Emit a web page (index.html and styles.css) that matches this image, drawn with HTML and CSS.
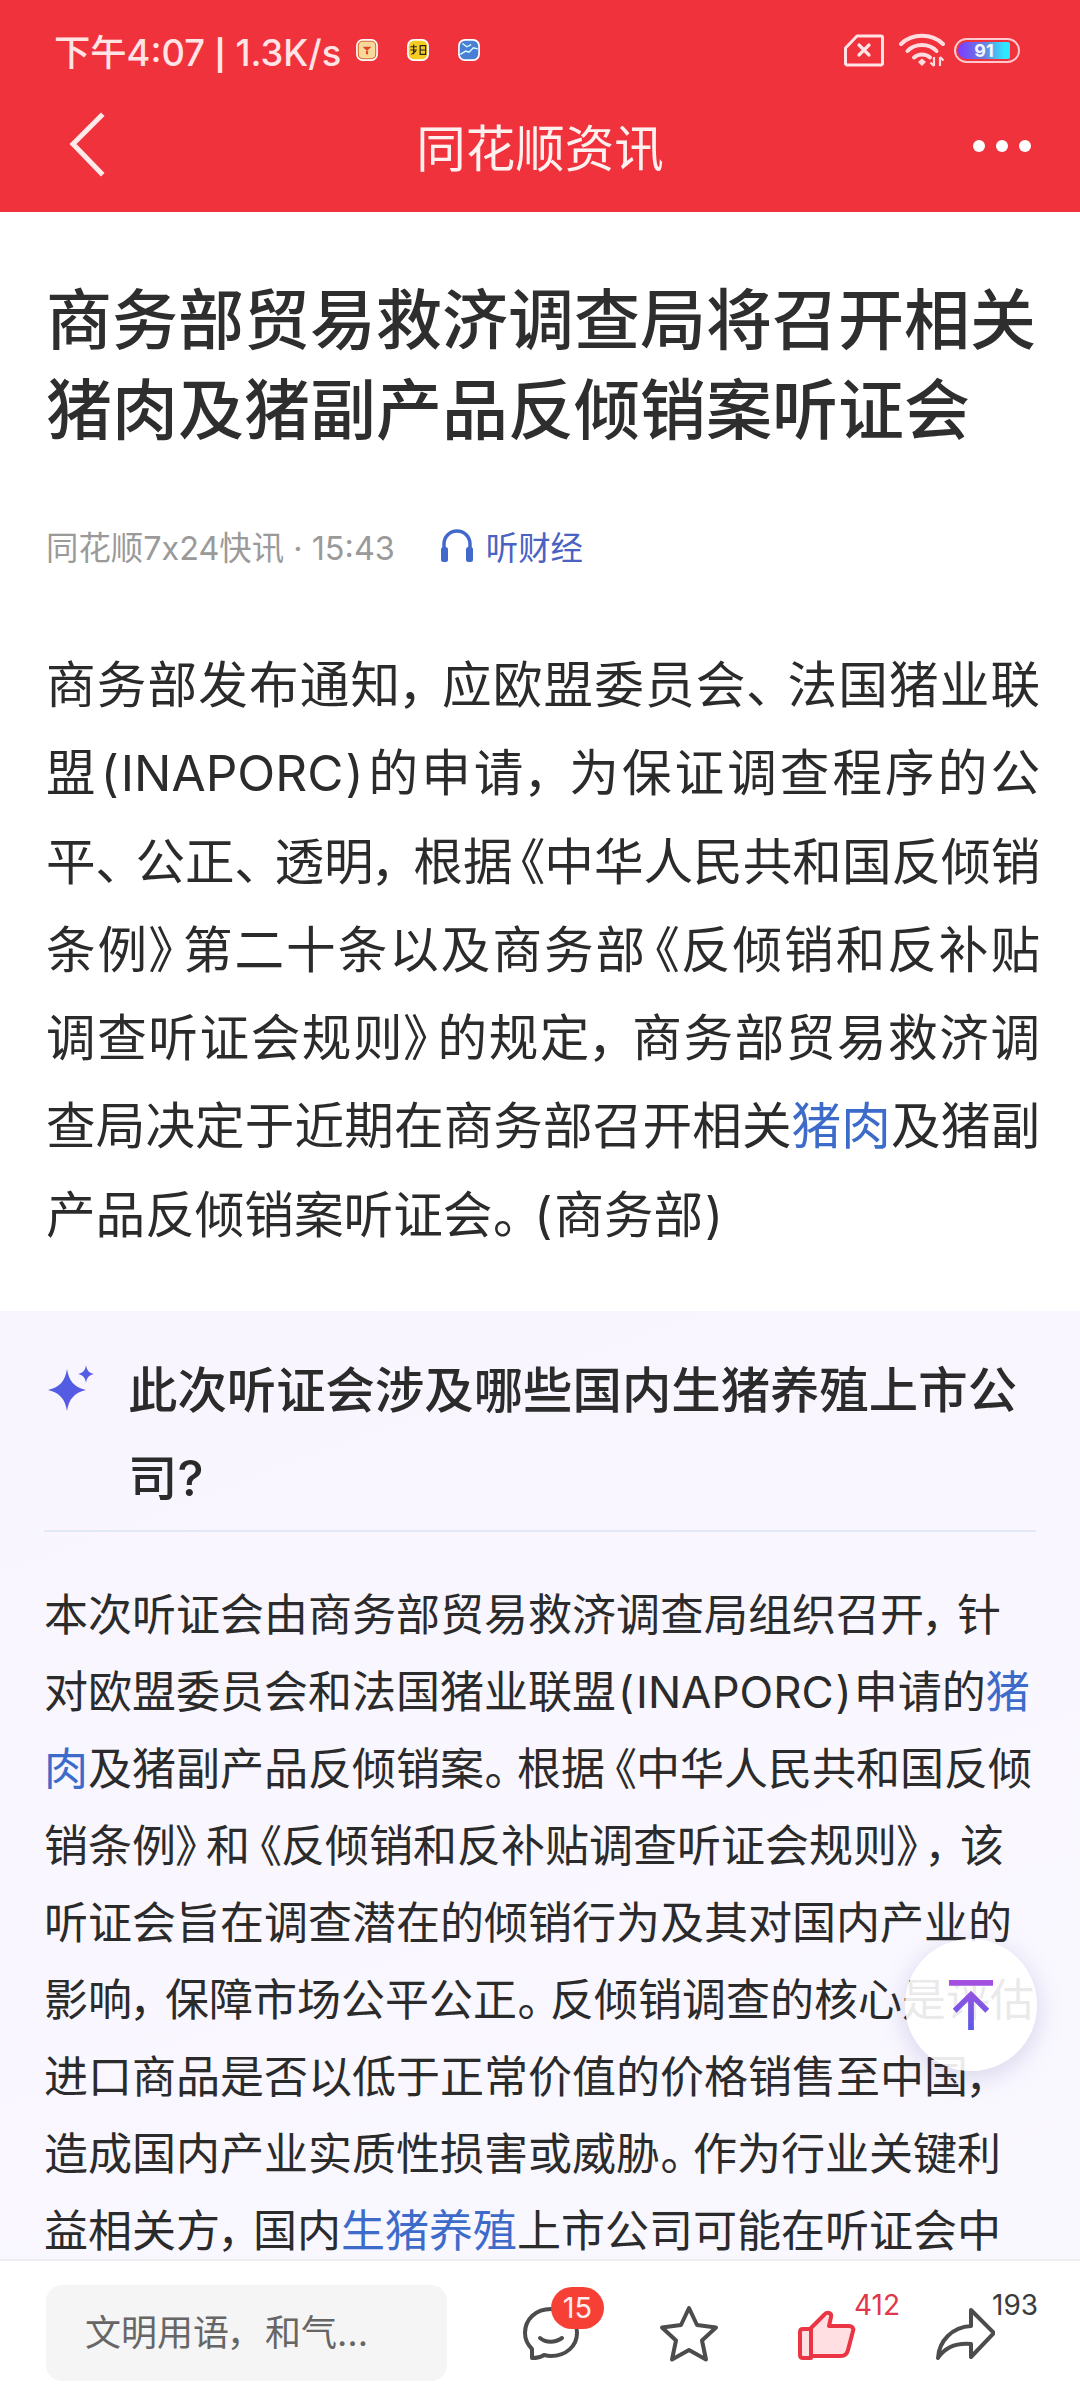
FILE: index.html
```html
<!DOCTYPE html>
<html lang="zh-CN">
<head>
<meta charset="utf-8">
<title>同花顺资讯</title>
<link rel="stylesheet" href="styles.css">
</head>
<body>
<div class="page">
  <header class="top">
    <div class="status">
      <span class="clock">下午4:07 <span class="pipe">|</span> 1.3K/s</span>
      <div class="notifs">
        <svg class="ni" viewBox="0 0 22 22"><rect x="1" y="1" width="20" height="20" rx="6" fill="#fff"/><rect x="3" y="3" width="16" height="16" rx="4" fill="#f9d99a" stroke="#d9672d"/><path d="M7 8h8l-4 4z" fill="#e0452c"/><path d="M11 12v3" stroke="#e0452c" stroke-width="2"/></svg>
        <svg class="ni" viewBox="0 0 22 22"><rect x="1" y="1" width="20" height="20" rx="6" fill="#fff"/><rect x="2.500" y="2.500" width="17" height="17" rx="5" fill="#f6cb22"/><path d="M4 8h6M4 11h6M7 6v9M5 15l4-3M13 7h5v8h-5zM13 11h5" stroke="#222" stroke-width="1.100" fill="none"/></svg>
        <svg class="ni" viewBox="0 0 22 22"><rect x="1" y="1" width="20" height="20" rx="6" fill="#fff"/><rect x="2.500" y="2.500" width="17" height="17" rx="5" fill="#4a7fd6"/><path d="M3 15l5-3 3 1 4-4 4 1M5 5l4 3 4-2" stroke="#dff" stroke-width="1.200" fill="none"/></svg>
      </div>
      <div class="sys">
        <svg class="sim" viewBox="0 0 40 33"><path d="M13 2H37a1.500 1.500 0 0 1 1.500 1.500V29.500A1.500 1.500 0 0 1 37 31H3a1.500 1.500 0 0 1-1.500-1.500V14z" fill="none" stroke="#ffe3e5" stroke-width="3" stroke-linejoin="round"/><path d="M15 11l10 10M25 11L15 21" stroke="#ffe3e5" stroke-width="3.200" stroke-linecap="round"/></svg>
        <svg class="wifi" viewBox="0 0 47 35"><path d="M2 11C13 0 33 0 44 11" fill="none" stroke="#ffdcdf" stroke-width="4" stroke-linecap="round"/><path d="M8.500 18C16 10 30 10 37.500 18" fill="none" stroke="#ffdcdf" stroke-width="4" stroke-linecap="round"/><path d="M15 24.500C19.500 20.500 26.500 20.500 31 24.500" fill="none" stroke="#ffdcdf" stroke-width="4" stroke-linecap="round"/><path d="M19 29l4-3.500 4 3.500-4 4z" fill="#ffdcdf"/><path d="M35 24v9M31.500 29.500L35 33M41 33v-9M41 24l3.500 3.500" fill="none" stroke="#ffdcdf" stroke-width="2.200"/></svg>
        <div class="batt"><div class="batt-fill"><span class="batt-num">91</span></div></div>
      </div>
    </div>
    <div class="nav">
      <svg class="back" viewBox="0 0 40 66"><path d="M33 4L5 32l28 29" fill="none" stroke="#ffeaea" stroke-width="5" stroke-linecap="square"/></svg>
      <h1 class="nav-title">同花顺资讯</h1>
      <div class="more"><i class="dot"></i><i class="dot"></i><i class="dot"></i></div>
    </div>
  </header>

  <main class="scroll">
    <article class="article">
      <h2 class="headline">商务部贸易救济调查局将召开相关<br>猪肉及猪副产品反倾销案听证会</h2>
      <div class="meta">
        <span class="source">同花顺7x24快讯 · 15:43</span>
        <svg class="phones" viewBox="0 0 34 36"><path d="M4 22V17a13 13 0 0 1 26 0v5" fill="none" stroke="#4169cc" stroke-width="3.500"/><rect x="1" y="20" width="7" height="15" rx="2.500" fill="#4169cc"/><rect x="26" y="20" width="7" height="15" rx="2.500" fill="#4169cc"/></svg>
        <span class="listen">听财经</span>
      </div>
      <div class="body">
        <p class="ln">商务部发布通知<span class="t">，</span>应欧盟委员会<span class="t">、</span>法国猪业联</p>
        <p class="ln">盟<span class="pr">(</span>INAPORC<span class="pr">)</span>的申请<span class="t">，</span>为保证调查程序的公</p>
        <p class="ln">平<span class="t">、</span>公正<span class="t">、</span>透明<span class="t">，</span>根据<span class="o">《</span>中华人民共和国反倾销</p>
        <p class="ln">条例<span class="c">》</span>第二十条以及商务部<span class="o">《</span>反倾销和反补贴</p>
        <p class="ln">调查听证会规则<span class="c">》</span>的规定<span class="t">，</span>商务部贸易救济调</p>
        <p class="ln">查局决定于近期在商务部召开相关<a class="link">猪肉</a>及猪副</p>
        <p class="ln last">产品反倾销案听证会<span class="t">。</span><span class="pr">(</span>商务部<span class="pr">)</span></p>
      </div>
    </article>

    <section class="qa">
      <div class="q">
        <svg class="spark" viewBox="0 0 50 50"><defs><linearGradient id="sg" x1="0" y1="0" x2="1" y2="1"><stop offset="0" stop-color="#4a63e0"/><stop offset="1" stop-color="#5e55e6"/></linearGradient></defs><path d="M22 6C24 18 29 24 41 27 29 30 24 36 22 48 20 36 15 30 3 27 15 24 20 18 22 6z" fill="url(#sg)"/><path d="M41 2C41.900 7.500 43.500 9.500 49 11 43.500 12.500 41.900 14.500 41 20 40.100 14.500 38.500 12.500 33 11 38.500 9.500 40.100 7.500 41 2z" fill="url(#sg)"/></svg>
        <h3 class="q-text">此次听证会涉及哪些国内生猪养殖上市公<br>司?</h3>
      </div>
      <div class="answer">
        <p class="al">本次听证会由商务部贸易救济调查局组织召开<span class="t">，</span>针</p>
        <p class="al">对欧盟委员会和法国猪业联盟<span class="pr">(</span>INAPORC<span class="pr">)</span>申请的<a class="link">猪</a></p>
        <p class="al"><a class="link">肉</a>及猪副产品反倾销案<span class="t">。</span>根据<span class="o">《</span>中华人民共和国反倾</p>
        <p class="al">销条例<span class="c">》</span>和<span class="o">《</span>反倾销和反补贴调查听证会规则<span class="c">》</span><span class="t">，</span>该</p>
        <p class="al">听证会旨在调查潜在的倾销行为及其对国内产业的</p>
        <p class="al">影响<span class="t">，</span>保障市场公平公正<span class="t">。</span>反倾销调查的核心是评估</p>
        <p class="al">进口商品是否以低于正常价值的价格销售至中国<span class="t">，</span></p>
        <p class="al">造成国内产业实质性损害或威胁<span class="t">。</span>作为行业关键利</p>
        <p class="al">益相关方<span class="t">，</span>国内<a class="link">生猪养殖</a>上市公司可能在听证会中</p>
      </div>
    </section>
  </main>

  <button class="fab" type="button" aria-label="回到顶部">
    <svg class="fab-icon" viewBox="0 0 48 52"><defs><linearGradient id="ag" x1="0" y1="0" x2="0" y2="1"><stop offset="0" stop-color="#a74fe0"/><stop offset="1" stop-color="#5a5be6"/></linearGradient></defs><path d="M1 0h46v6H1zM24 11L5 30l4 4 12-12v30h6V22l12 12 4-4z" fill="url(#ag)"/></svg>
  </button>

  <footer class="bar">
    <div class="input">文明用语<span class="t">，</span>和气…</div>
    <div class="actions">
      <div class="act">
        <svg class="ic" viewBox="0 0 60 60"><path d="M30 5C15 5 4 15 4 29c0 7 3 12 7 16v9c5 0 9-1 12-3 2 .500 5 1 7 1 15 0 26-10 26-23S45 5 30 5z" fill="none" stroke="#4c4c4c" stroke-width="4" stroke-linejoin="round"/><path d="M19 34c6 5 15 5 22 0" fill="none" stroke="#4c4c4c" stroke-width="4" stroke-linecap="round"/></svg>
        <span class="badge">15</span>
      </div>
      <div class="act">
        <svg class="ic" viewBox="0 0 60 60"><path d="M30 4l8 17 19 2.500-14 13 4 19L30 46l-17 9.500 4-19-14-13L22 21z" fill="none" stroke="#4c4c4c" stroke-width="4" stroke-linejoin="round"/></svg>
      </div>
      <div class="act">
        <svg class="ic" viewBox="0 0 60 60"><path d="M13 25l14-14c3-4 8-2 7 2l-2 9h20c3 0 5 2 4 5l-5 19c-1 4-4 6-7 6H13z" fill="#ffdfe1" stroke="#ea3544" stroke-width="4" stroke-linejoin="round"/><path d="M14 25H6c-2 0-3 1-3 3v23c0 2 1 3 3 3h8z" fill="#ffdfe1" stroke="#ea3544" stroke-width="4" stroke-linejoin="round"/></svg>
        <span class="count count-red">412</span>
      </div>
      <div class="act">
        <svg class="ic" viewBox="0 0 60 60"><path d="M36 6l23 23-23 24V40C24 39 11 42 3 54c1-17 14-31 33-32z" fill="none" stroke="#4c4c4c" stroke-width="4" stroke-linejoin="round"/></svg>
        <span class="count">193</span>
      </div>
    </div>
  </footer>
</div>
</body>
</html>
```

FILE: styles.css
```css
* { box-sizing: border-box; margin: 0; padding: 0; }
html, body { width: 1080px; height: 2400px; overflow: hidden; background: #fff; }
body { font-family: "Inter", "Noto Sans CJK SC", sans-serif; color: #2b2b2b; }
.page { position: relative; width: 1080px; height: 2400px; display: flex; flex-direction: column; overflow: hidden; }

.top { flex: none; height: 212px; background: #f0323c; }
.status { height: 100px; padding: 0 60px 0 54px; display: flex; align-items: center; }
.clock { font-size: 36.300px; font-weight: 500; color: #ffe3e5; white-space: nowrap; }
.pipe { font-size: 30px; font-weight: 700; }
.notifs { display: flex; gap: 27px; margin-left: 14px; }
.ni { width: 24px; height: 24px; display: block; }
.sys { margin-left: auto; display: flex; align-items: center; }
.sim { width: 40px; height: 33px; display: block; }
.wifi { width: 47px; height: 35px; display: block; margin-left: 15px; }
.batt { width: 66px; height: 25px; margin-left: 8px; border: 2px solid #ffc9cd; border-radius: 13px; padding: 2px 8px 2px 2px; }
.batt-fill { height: 100%; border-radius: 9px 2px 2px 9px; background: linear-gradient(90deg, #7a3cff 0%, #6a7fe0 50%, #2fe8ff 90%); display: flex; justify-content: center; align-items: center; }
.batt-num { font-size: 18px; font-weight: 700; line-height: 17px; color: #f2f6ff; }

.nav { position: relative; height: 112px; display: flex; align-items: center; justify-content: center; padding-bottom: 22px; }
.back { position: absolute; left: 68px; top: 12px; width: 40px; height: 66px; }
.nav-title { font-size: 49.500px; font-weight: 400; color: #fff0f0; }
.more { position: absolute; left: 973px; top: 40px; display: flex; gap: 11px; }
.dot { display: block; width: 12px; height: 12px; border-radius: 50%; background: #fff; }

.scroll { flex: 1; overflow: hidden; }
.article { padding: 0 40px 0 46px; }
.headline { padding-top: 63px; font-size: 66px; font-weight: 500; line-height: 90px; color: #2e2e2e; white-space: nowrap; }
.meta { margin-top: 68px; height: 44px; display: flex; align-items: center; font-size: 32.400px; }
.source { color: #9a9a9a; white-space: nowrap; }
.phones { width: 34px; height: 36px; margin-left: 45px; display: block; }
.listen { margin-left: 12px; color: #4a62c2; }
.body { margin-top: 74px; padding-bottom: 52px; font-size: 49.600px; line-height: 88.300px; }
.ln { text-align: justify; text-align-last: justify; white-space: nowrap; }
.ln.last { text-align-last: left; }
.link { color: #3d6bc9; }

.t, .o, .c { font-feature-settings: "palt"; }
.body .t { padding-right: 15px; }
.body .o { padding-left: 7px; }
.body .c { padding-right: 7px; }
.answer .t { padding-right: 11px; }
.answer .o { padding-left: 9px; }
.answer .c { padding-right: 8px; }
.input .t { padding-right: 18px; }
.body .pr { margin: 0 2px; }
.answer .pr { margin: 0 2px; }

.qa { min-height: 1200px; background: linear-gradient(160deg, #f8f5fe 0%, #faf8ff 100%); padding: 35px 44px 0; }
.q { position: relative; display: flex; gap: 33px; padding: 0 0 8px 1px; border-bottom: 2px solid #e3e8f6; }
.spark { flex: none; width: 50px; height: 50px; margin-top: 17px; }
.q-text { font-size: 49.400px; font-weight: 500; line-height: 88px; color: #2b2b2b; white-space: nowrap; }
.answer { padding-top: 45px; font-size: 44px; line-height: 77px; color: #2b2b2b; }
.al { white-space: nowrap; }

.fab { position: absolute; left: 905px; top: 1939px; width: 132px; height: 132px; border: 0; border-radius: 50%; background: rgba(255,255,255,.9); box-shadow: 0 6px 26px rgba(90,90,170,.22); display: flex; align-items: center; justify-content: center; }
.fab-icon { width: 46px; height: 50px; display: block; }

.bar { position: absolute; left: 0; bottom: 0; width: 1080px; height: 141px; background: #fff; border-top: 2px solid #eeeef0; display: flex; align-items: flex-start; padding: 24px 0 0 46px; }
.input { width: 401px; height: 96px; background: #f5f5f5; border-radius: 16px; padding-left: 39px; font-size: 36px; line-height: 96px; color: #666; white-space: nowrap; }
.actions { display: flex; gap: 78px; margin-left: 74px; margin-top: 19px; }
.act { position: relative; width: 60px; height: 60px; }
.ic { width: 60px; height: 60px; display: block; }
.badge { position: absolute; left: 30px; top: -17px; width: 53px; height: 42px; border-radius: 21px; background: #f63f35; color: #ffeeee; font-size: 29px; line-height: 42px; text-align: center; }
.count { position: absolute; left: 57px; top: -15px; font-size: 28px; line-height: 32px; color: #3b3b3b; }
.count-red { color: #e0384a; }
```
